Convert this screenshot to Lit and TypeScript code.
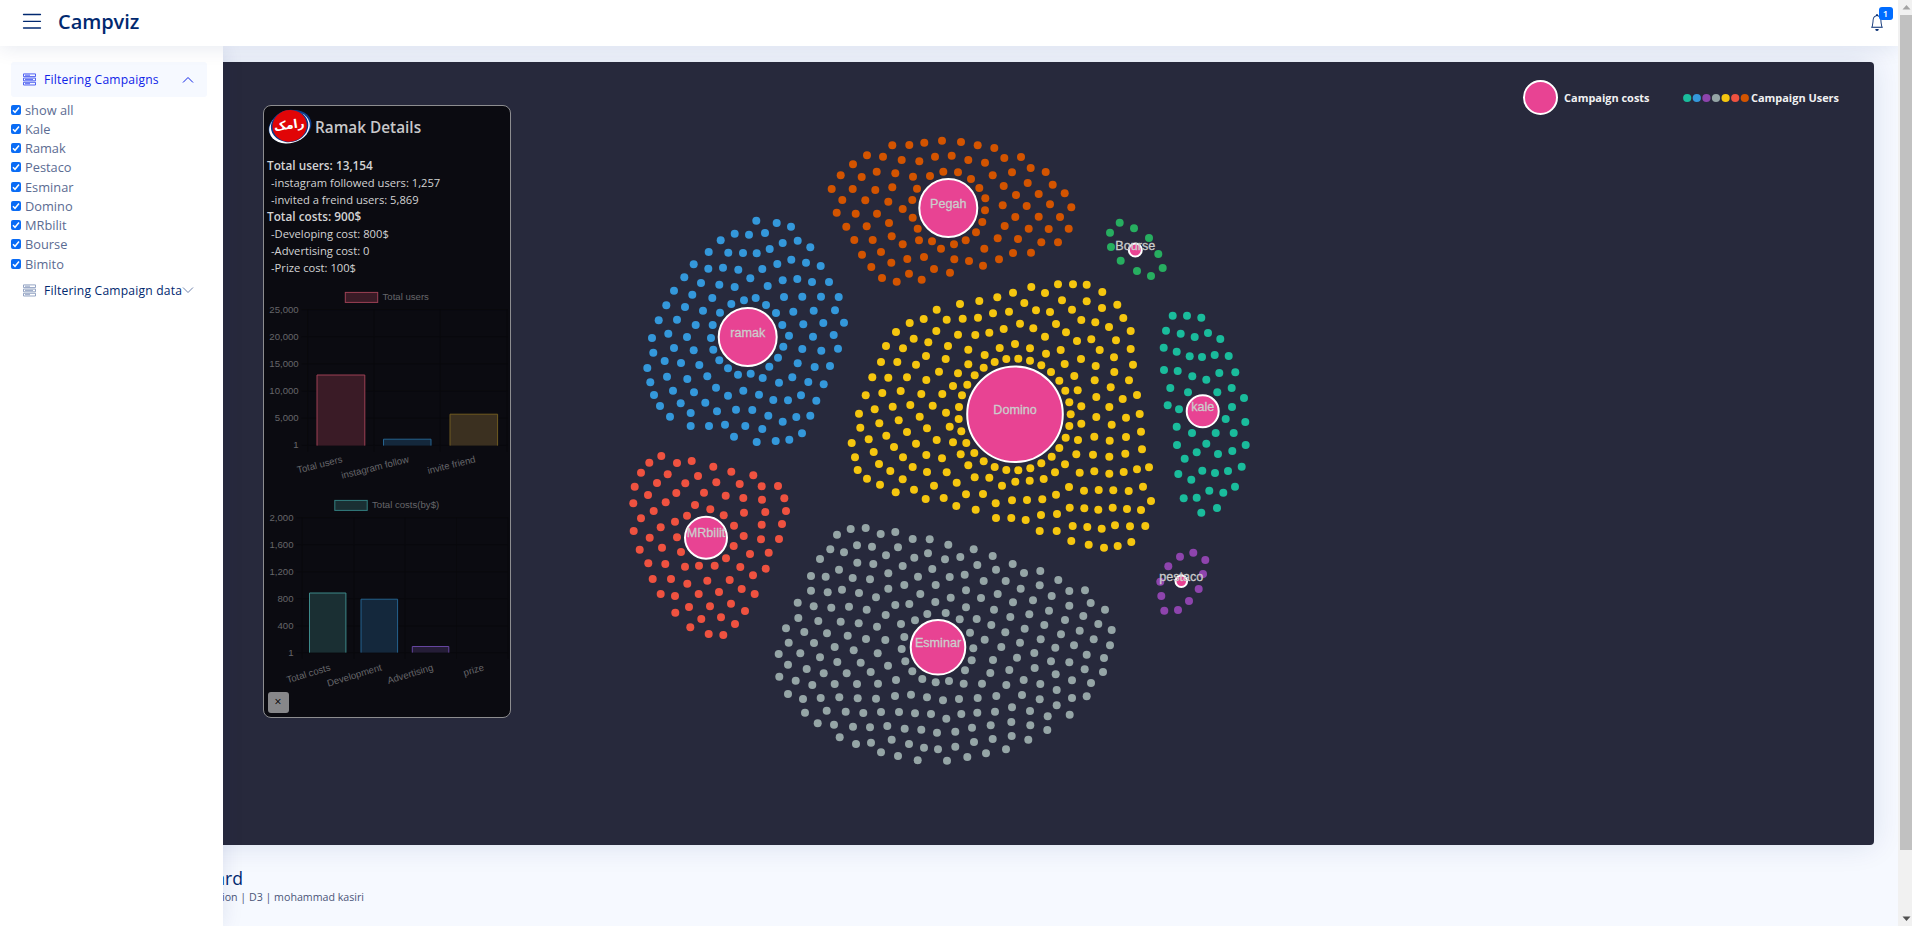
import { LitElement, html, svg, css } from "lit";
import { customElement, state } from "lit/decorators.js";

interface Cluster {
  name: string;
  color: string;
  cx: number;
  cy: number;
  r: number;
  // dots are stored in thirds of a pixel, relative to this origin
  origin: [number, number];
  dots: number[];
}

const CLUSTERS: Cluster[] = [
  {
    name: "Pegah", color: "#d35400", cx: 948.3, cy: 208, r: 29, origin: [810, 120],
    dots: [247,76,298,75,343,68,396,62,453,66,503,76,553,84,171,106,219,110,275,120,328,124,375,110,425,107,475,120,525,128,583,114,633,111,129,133,662,144,707,156,92,166,155,171,200,155,256,160,309,170,360,168,400,155,444,157,483,177,548,166,606,157,653,189,728,194,65,207,128,207,196,210,247,202,321,206,508,204,581,198,618,225,686,222,764,220,97,240,166,241,235,245,307,240,526,235,578,256,650,258,720,253,784,262,80,278,137,281,201,281,278,267,308,293,525,271,517,306,616,291,686,290,750,291,109,320,170,319,237,309,323,326,498,337,584,318,656,326,716,327,776,326,133,360,188,360,245,349,327,361,366,364,432,373,467,361,563,355,624,357,694,367,744,367,156,404,213,396,278,373,393,386,523,386,609,399,663,398,184,441,244,428,292,417,342,411,433,418,477,423,519,437,567,418,216,474,260,485,297,461,335,479,372,447,420,458],
  },
  {
    name: "ramak", color: "#3498db", cx: 747.7, cy: 337, r: 29, origin: [620, 200],
    dots: [409,62,470,69,513,80,344,101,387,104,435,99,302,121,488,129,533,122,571,142,266,156,325,158,369,159,410,160,449,147,221,193,265,206,309,203,355,209,427,207,472,192,514,179,558,188,602,198,193,232,243,249,298,254,344,261,391,235,443,258,488,241,532,237,576,246,627,246,162,272,217,284,277,294,334,312,372,301,407,294,438,315,492,291,547,290,603,290,656,291,139,316,195,321,249,332,300,338,468,339,520,335,581,332,645,331,116,361,171,359,227,375,278,375,487,375,550,373,610,369,672,368,96,414,145,401,201,411,273,414,507,407,579,410,641,405,100,458,162,444,221,451,280,449,490,440,547,447,604,452,654,446,82,504,134,483,183,489,238,495,298,481,474,473,533,490,584,501,630,498,91,547,141,530,202,537,262,529,324,505,354,524,392,521,428,534,448,500,477,548,517,532,565,546,611,553,102,585,159,572,222,577,288,563,324,587,370,572,417,584,460,600,504,601,543,586,589,602,120,618,182,610,256,608,212,639,291,634,348,629,397,630,445,647,488,665,529,651,571,647,150,650,212,678,267,678,315,674,376,678,427,687,342,710,410,726,467,723,508,719,546,700],
  },
  {
    name: "Domino", color: "#f5c60f", cx: 1015, cy: 414.3, r: 47.8, origin: [830, 270],
    dots: [604,51,684,43,729,43,770,44,817,66,645,69,549,68,502,82,448,93,390,102,583,99,696,91,770,94,862,104,816,114,320,119,618,121,660,126,726,119,880,144,281,147,350,149,398,146,444,143,489,130,537,125,239,159,570,161,678,162,754,150,796,157,837,171,902,183,198,186,319,183,384,194,436,195,478,188,521,177,610,175,708,187,645,200,251,206,295,217,741,213,784,208,858,211,168,228,219,235,354,228,415,239,509,234,555,222,600,235,692,240,809,240,902,237,648,251,464,255,288,258,347,267,529,267,565,266,600,272,753,267,852,262,153,276,202,276,258,284,415,283,494,276,634,286,704,282,797,288,909,284,461,293,127,322,175,323,231,322,327,305,384,310,434,316,663,306,733,318,853,306,289,330,688,332,794,331,897,331,369,348,412,344,842,352,107,376,157,369,212,363,274,372,337,372,396,376,706,362,743,361,799,381,878,387,921,375,134,418,188,410,241,405,308,407,387,411,718,397,754,409,838,411,87,431,269,440,348,428,386,447,722,433,799,441,888,443,929,432,91,473,148,460,206,451,291,475,359,470,394,484,718,468,754,461,845,464,116,508,169,497,231,486,320,510,369,517,409,519,707,503,744,510,793,500,839,512,888,501,933,485,65,519,192,531,258,521,688,534,131,546,289,555,392,553,433,549,739,553,789,554,838,560,886,551,936,538,75,562,219,562,336,565,461,574,665,560,147,582,415,586,494,591,634,580,705,583,83,600,181,603,248,591,291,606,350,607,529,600,565,601,601,595,675,607,749,608,793,604,838,611,881,606,921,598,957,592,111,626,218,628,434,622,478,623,556,635,599,632,641,627,150,644,380,638,516,647,312,647,717,651,762,662,806,660,850,661,896,663,939,650,197,667,252,659,408,673,459,672,678,674,287,687,341,684,497,700,546,691,591,690,637,688,963,693,379,708,437,719,681,732,719,713,763,715,805,719,848,713,891,717,933,720,498,744,544,744,587,750,633,735,629,783,680,783,728,768,772,771,815,776,855,766,900,769,946,768,724,813,776,824,822,833,863,828,904,816],
  },
  {
    name: "kale", color: "#1abc9c", cx: 1202.7, cy: 411.3, r: 16, origin: [1090, 290],
    dots: [248,77,291,77,334,83,228,122,272,131,314,141,354,129,391,147,221,173,260,185,299,199,336,201,374,195,416,198,222,240,263,243,307,259,349,269,388,249,436,247,241,294,294,307,382,307,425,294,462,324,233,346,267,358,426,351,407,387,466,396,260,410,306,429,377,429,431,429,261,465,349,461,320,487,467,465,284,506,384,492,427,483,455,530,265,552,304,569,337,542,375,549,414,543,435,590,281,625,320,623,358,602,400,608,334,668,381,654],
  },
  {
    name: "MRbilit", color: "#ef5240", cx: 706, cy: 537.7, r: 21, origin: [610, 430],
    dots: [154,78,118,98,201,99,245,93,310,110,93,128,173,133,264,138,364,125,430,136,74,170,141,159,226,160,319,157,389,162,455,169,504,168,114,195,199,189,282,188,347,197,400,204,456,209,523,205,70,220,167,217,255,225,131,243,301,238,402,248,466,246,528,243,93,265,195,275,231,257,341,256,152,292,372,287,455,284,516,282,71,303,119,323,201,322,401,318,453,328,507,327,89,359,156,353,213,366,371,348,420,372,476,368,115,400,166,402,225,410,267,407,314,407,348,385,391,411,467,416,128,447,183,447,232,461,292,452,359,450,429,436,152,492,195,498,266,492,327,486,395,477,434,492,237,531,300,529,363,521,196,548,274,567,333,562,405,543,241,592,375,582,296,612,340,615],
  },
  {
    name: "Esminar", color: "#95a5a6", cx: 938, cy: 647.3, r: 27.3, origin: [760, 510],
    dots: [231,74,272,57,317,54,362,72,406,66,458,87,509,88,565,104,641,118,698,138,758,162,841,183,895,210,928,243,975,241,992,279,1035,299,1015,342,1055,360,211,118,252,127,291,106,336,110,378,136,414,112,463,143,504,130,555,148,601,141,652,165,708,179,792,189,180,147,237,179,292,158,340,162,385,190,428,168,474,200,517,177,569,201,614,194,671,213,737,213,782,236,839,226,875,258,153,198,197,200,278,204,330,208,385,236,433,225,527,225,618,241,713,252,819,271,153,242,203,247,246,239,297,249,348,262,481,252,572,263,663,264,759,277,867,302,928,287,970,318,113,278,161,289,214,293,267,290,320,299,377,315,406,285,448,282,526,276,618,292,702,299,751,321,808,313,853,345,915,330,959,362,115,324,175,333,242,335,296,340,351,350,423,342,465,331,502,312,557,309,599,328,650,327,694,345,736,367,794,356,842,388,903,373,942,406,1001,388,1050,406,78,355,133,366,201,370,263,377,318,387,376,390,433,381,630,368,674,389,724,411,780,398,823,429,886,413,980,434,1032,444,86,398,162,399,224,411,281,421,353,430,425,417,640,415,771,443,873,454,928,457,56,432,121,430,180,442,232,456,302,458,384,467,436,454,635,451,699,450,748,480,824,474,887,493,974,478,1029,486,84,464,140,477,191,490,260,490,332,486,457,484,615,481,691,489,791,510,841,522,936,511,993,519,58,500,107,512,157,525,224,522,291,522,354,521,408,510,487,507,527,517,567,513,611,521,666,521,739,525,890,540,84,552,129,567,182,564,238,562,293,565,348,566,405,558,453,554,501,562,549,571,597,567,653,564,709,558,786,555,839,568,936,564,980,559,135,608,200,602,257,605,310,609,363,606,417,606,465,610,513,612,559,626,604,612,652,608,705,605,756,592,810,603,890,586,863,619,929,614,173,640,222,644,279,650,330,652,382,648,434,656,484,659,531,668,586,665,636,653,692,646,754,636,811,646,862,660,239,682,288,702,333,698,395,689,447,702,492,713,534,718,586,710,642,696,698,687,755,678,805,689,363,727,414,738,473,751,561,752,622,741,678,730,738,718],
  },
  {
    name: "Bourse", color: "#27ae60", cx: 1135.3, cy: 250, r: 6.5, origin: [810, 120],
    dots: [929,308,972,325,900,338,1017,354,903,381,1045,402,932,422,1058,444,981,453,1023,468],
  },
  {
    name: "pestaco", color: "#8e44ad", cx: 1181.3, cy: 581.3, r: 5.8, origin: [1090, 290],
    dots: [310,788,270,800,346,810,235,829,339,852,211,875,326,897,214,918,297,933,223,962,264,960],
  },
];

const FILTERS = ["show all", "Kale", "Ramak", "Pestaco", "Esminar", "Domino", "MRbilit", "Bourse", "Bimito"];
const LEGEND = ["#1abc9c", "#3498db", "#8e44ad", "#95a5a6", "#f5c60f", "#ef5240", "#d35400"];

interface Bar { x: number; w: number; y: number; fill: string; stroke: string }
interface ChartSpec {
  title: string; view: string; height: number;
  key: { x: number; y: number; fill: string; stroke: string };
  base: number; axis: number; top: number; step: number; ticks: string[];
  grid: number[]; bars: Bar[]; angle: number; labelY: number; labels: [string, number][];
}

const USERS: ChartSpec = {
  title: "Total users", view: "264 283.4 245 206", height: 206,
  key: { x: 345.3, y: 292.8, fill: "#3a1b26", stroke: "#9d4155" },
  base: 446, axis: 298.7, top: 310, step: 27.15, ticks: ["25,000", "20,000", "15,000", "10,000", "5,000", "1"],
  grid: [307.6, 374, 440.3, 507],
  bars: [
    { x: 317, w: 47.8, y: 375.4, fill: "#3a1b26", stroke: "#9d4155" },
    { x: 383.5, w: 47.5, y: 439.6, fill: "#14283c", stroke: "#25638f" },
    { x: 450, w: 47.6, y: 414.6, fill: "#3b3020", stroke: "#705b20" },
  ],
  angle: -14, labelY: 462.5, labels: [["Total users", 343], ["instagram follow", 409.5], ["invite friend", 476]],
};

const COSTS: ChartSpec = {
  title: "Total costs(by$)", view: "264 489.4 245 200", height: 200,
  key: { x: 334.8, y: 500.8, fill: "#1a2f33", stroke: "#337f80" },
  base: 653, axis: 293.5, top: 518, step: 27.05, ticks: ["2,000", "1,600", "1,200", "800", "400", "1"],
  grid: [302.3, 354, 405, 456.5, 508],
  bars: [
    { x: 309.5, w: 36.4, y: 593.4, fill: "#1a2f33", stroke: "#3d8a8a" },
    { x: 361, w: 36.6, y: 599.6, fill: "#14283c", stroke: "#25638f" },
    { x: 412.3, w: 36.5, y: 646.9, fill: "#251d37", stroke: "#6545a0" },
  ],
  angle: -17, labelY: 670.5,
  labels: [["Total costs", 331], ["Development", 382.3], ["Advertising", 433.8], ["prize", 484.5]],
};

@customElement("cost-chart")
class CostChart extends LitElement {
  static properties = { spec: { attribute: false } };
  declare spec: ChartSpec;

  static styles = css`
    :host { display: block; }
    svg { display: block; }
    text { font: 9.6px "Liberation Sans", Arial, sans-serif; fill: #66666a; }
    .grid { stroke: #09090d; stroke-width: 1; }
  `;

  render() {
    const s = this.spec;
    return html`<svg width="245" height=${s.height} viewBox=${s.view}>
      ${s.grid.map((x) => svg`<line class="grid" x1=${x} x2=${x} y1=${s.top} y2=${s.base + 6} />`)}
      ${s.ticks.map((t, i) => svg`
        <line class="grid" x1=${s.grid[0] - 6} x2="508" y1=${s.top + i * s.step} y2=${s.top + i * s.step} />
        <text x=${s.axis} y=${s.top + i * s.step + 3} text-anchor="end">${t}</text>`)}
      <rect x=${s.key.x} y=${s.key.y} width="32.4" height="10" fill=${s.key.fill} stroke=${s.key.stroke} />
      <text x=${s.key.x + 37.2} y=${s.key.y + 7.3}>${s.title}</text>
      ${s.bars.map((b) => svg`
        <rect x=${b.x} y=${b.y} width=${b.w} height=${s.base - b.y} fill=${b.fill} />
        <path d=${`M${b.x} ${s.base}V${b.y}h${b.w}V${s.base}`} fill="none" stroke=${b.stroke} />`)}
      ${s.labels.map(([t, x]) => svg`
        <text x=${x} y=${s.labelY} text-anchor="end" transform=${`rotate(${s.angle} ${x} ${s.labelY})`}>${t}</text>`)}
    </svg>`;
  }
}

@customElement("bubble-map")
class BubbleMap extends LitElement {
  static styles = css`
    :host { display: block; }
    svg { display: block; }
    text {
      font: 12.6px "Liberation Sans", Arial, sans-serif; fill: #cccccc; text-anchor: middle;
      stroke: #cccccc; stroke-width: .3;
    }
    .hub { fill: #e84393; stroke: #fff; stroke-width: 2; }
  `;

  render() {
    return html`<svg width="740" height="700" viewBox="580 110 740 700">
      ${CLUSTERS.map((c) => {
        const nodes = [];
        for (let i = 0; i < c.dots.length; i += 2) {
          nodes.push(svg`<circle cx=${(c.origin[0] + c.dots[i] / 3).toFixed(1)} cy=${(c.origin[1] + c.dots[i + 1] / 3).toFixed(1)} r="4" />`);
        }
        return svg`<g fill=${c.color}>${nodes}</g>
          <circle class="hub" cx=${c.cx} cy=${c.cy} r=${c.r} />
          <text x=${c.cx} y=${c.cy - 0.3}>${c.name}</text>`;
      })}
    </svg>`;
  }
}

@customElement("app-root")
class AppRoot extends LitElement {
  @state() private checked = new Set<string>(FILTERS);

  static styles = css`
    * { box-sizing: border-box; }
    :host {
      display: grid;
      grid-template-columns: 1fr 14px;
      height: 926px;
      overflow: hidden;
      font-family: "Open Sans", "Noto Sans", sans-serif;
      background: #f6f9ff;
      color: #012970;
    }
    .page { position: relative; display: flex; flex-direction: column; height: 926px; overflow: hidden; }
    .header {
      position: relative; z-index: 3; flex: none; height: 46px; padding: 0 5px 0 22px;
      display: flex; align-items: center; background: #fff;
      box-shadow: 0 2px 20px rgba(1, 41, 112, .1);
    }
    .burger { width: 20px; height: 16px; margin-top: -4px; }
    .brand { margin: -3px 0 0 16px; font-size: 20px; font-weight: 600; letter-spacing: -.05px; }
    .bell { position: relative; margin-left: auto; width: 23px; height: 30px; }
    .bell svg { position: absolute; left: 0; top: 6px; }
    .badge {
      position: absolute; left: 8.5px; top: -1px; width: 14px; height: 13px; border-radius: 3px;
      background: #006cff; color: #fff; font-size: 9.5px; line-height: 13px; font-weight: 600; text-align: center;
    }
    .sidebar {
      position: absolute; z-index: 2; left: 0; top: 46px; bottom: 0; width: 223px;
      padding: 16px 16px 0 11px; background: #fff; box-shadow: 0 0 20px rgba(1, 41, 112, .1);
    }
    .nav {
      display: flex; align-items: center; height: 35px; padding: 0 13px 0 12px; border-radius: 3px;
      font-size: 12.1px; font-weight: 500; letter-spacing: .2px; white-space: nowrap;
    }
    .nav .ico { flex: none; width: 13px; height: 13px; margin-right: 8px; color: #899bbd; }
    .nav .chev { flex: none; width: 12px; height: 12px; margin-left: auto; }
    .nav.open { background: #f6f9ff; color: #0f24e8; }
    .nav.open .ico { color: #4154f1; }
    .list { padding-top: 3px; }
    .row { display: flex; align-items: center; height: 19.25px; font-size: 12.8px; font-weight: 400; color: #5b6b92; }
    .box { flex: none; width: 10px; height: 10px; margin-right: 4px; border-radius: 2px; background: #0a6cf5; }
    .box.off { background: #fff; border: 1px solid #767676; }
    .box svg { display: block; }
    .second { margin-top: -.5px; }
    .main { flex: 1; padding: 16px 24px 0 24px; }
    .board {
      position: relative; height: 782.5px; display: flex; border-radius: 4px; background: #27293c;
      box-shadow: 0 0 30px rgba(1, 41, 112, .12);
    }
    .panel {
      flex: none; width: 248px; height: 613px; margin: 42.5px 0 0 239px; padding: 0 0 0 3px; border: 1px solid #8d8d90;
      border-radius: 8px; background: #0b0b11; color: #d3d3d4; overflow: hidden;
    }
    .head { display: flex; align-items: center; height: 44px; font-size: 15.35px; font-weight: 600; color: #c8c8ca; }
    .head svg { flex: none; margin: -1px 2px 0 0; }
    .head span { margin-top: -1px; }
    .facts { padding: 7px 0 0 0; font-size: 11.2px; line-height: 17px; height: 133px; }
    .facts .strong { font-weight: 600; font-size: 11.8px; }
    .facts .sub { padding-left: 4px; }
    .panel cost-chart { margin-left: -3.5px; }
    .close {
      display: block; width: 21px; height: 21px; margin: 3px 0 0 .5px; padding: 0; border: 0; border-radius: 3px;
      background: #87878a; color: #000; font: 12px/20px "Open Sans", sans-serif;
    }
    .map { margin: 47.7px 0 0 69px; }
    .legend {
      position: absolute; right: 35px; top: 17.5px; height: 36px; display: flex; align-items: center;
      font-size: 10.95px; font-weight: 700; color: #f1f1f2; white-space: nowrap;
    }
    .costs { width: 35px; height: 35px; margin-right: 6px; border: 2px solid #fff; border-radius: 50%; background: #e84393; }
    .dots { display: block; margin: 0 2px 0 33.5px; }
    .caption { padding: 22.5px 0 0 0; width: 220px; color: #012970; text-align: right; white-space: nowrap; }
    .caption .title { font-size: 17.6px; line-height: 22px; margin-right: 1px; }
    .caption .crumb { width: 340px; margin-top: 0; font-size: 10.65px; line-height: 16px; color: #4a5578; }
    .scroll { position: relative; z-index: 4; display: flex; flex-direction: column; align-items: flex-end; background: #f1f1f1; }
    .thumb { width: 12px; height: 835px; background: #c1c1c1; }
    .scroll svg { display: block; flex: none; }
    .gap { flex: 1; }
  `;

  private toggle(name: string) {
    const next = new Set(this.checked);
    next.has(name) ? next.delete(name) : next.add(name);
    this.checked = next;
  }

  private stackIcon() {
    return html`<svg class="ico" viewBox="0 0 13 13" fill="none" stroke="currentColor" stroke-width=".9">
      <path d="M.5 .9h12v2.7H.5zM.5 5.1h12v2.7H.5zM.5 9.3h12V12H.5zM2 2.2h5M2 6.4h8M2 10.7h5" />
    </svg>`;
  }

  render() {
    return html`
      <div class="page">
        <header class="header">
          <svg class="burger" viewBox="0 0 20 16" stroke="#012970" stroke-width="1.3" stroke-linecap="round">
            <path d="M1.5 1.5h17M1.5 8.3h17M1.5 15h17" />
          </svg>
          <div class="brand">Campviz</div>
          <div class="bell">
            <svg width="14" height="17" viewBox="0 0 16 16" preserveAspectRatio="none" fill="#012970">
              <path d="M8 16a2 2 0 0 0 2-2H6a2 2 0 0 0 2 2zM8 1.918l-.797.161A4.002 4.002 0 0 0 4 6c0 .628-.134 2.197-.459 3.742-.16.767-.376 1.566-.663 2.258h10.244c-.287-.692-.502-1.49-.663-2.258C12.134 8.197 12 6.628 12 6a4.002 4.002 0 0 0-3.203-3.92L8 1.917zM14.22 12c.223.447.481.801.78 1H1c.299-.199.557-.553.78-1C2.68 10.2 3 6.88 3 6c0-2.42 1.72-4.44 4.005-4.901a1 1 0 1 1 1.99 0A5.002 5.002 0 0 1 13 6c0 .88.32 4.2 1.22 6z" />
            </svg>
            <span class="badge">1</span>
          </div>
        </header>

        <aside class="sidebar">
          <div class="nav open">
            ${this.stackIcon()}<span>Filtering Campaigns</span>
            <svg class="chev" viewBox="0 0 12 12" fill="none" stroke="currentColor"><path d="M1 8.5l5-5 5 5" /></svg>
          </div>
          <div class="list">
            ${FILTERS.map((f) => html`
              <div class="row" @click=${() => this.toggle(f)}>
                <span class="box ${this.checked.has(f) ? "" : "off"}">
                  <svg width="10" height="10" viewBox="0 0 10 10" fill="none" stroke="#fff" stroke-width="1.5"><path d="M2 5.3l2 2 4-4.8" /></svg>
                </span><span>${f}</span>
              </div>`)}
          </div>
          <div class="nav second">
            ${this.stackIcon()}<span>Filtering Campaign data</span>
            <svg class="chev" viewBox="0 0 12 12" fill="none" stroke="#6f82ab"><path d="M1 3.5l5 5 5-5" /></svg>
          </div>
        </aside>

        <main class="main">
          <section class="board">
            <div class="panel">
              <div class="head">
                <svg width="46" height="38" viewBox="0 0 46 38">
                  <ellipse cx="23" cy="18.5" rx="21.8" ry="16" transform="rotate(-17 23 18.5)" fill="#0b3c8c" />
                  <ellipse cx="22.5" cy="19.5" rx="20.6" ry="15.6" transform="rotate(-15 22.5 19.5)" fill="#fff" />
                  <ellipse cx="22.6" cy="18" rx="18.8" ry="16" transform="rotate(-12 22.6 18)" fill="#0b3c8c" />
                  <ellipse cx="22.6" cy="17.8" rx="17.2" ry="15.8" transform="rotate(-12 22.6 17.8)" fill="#e10507" />
                  <text x="22.5" y="21" text-anchor="middle" font-family="DejaVu Sans" font-weight="700" font-size="12" fill="#fff" transform="rotate(-8 22 20)">رامک</text>
                </svg>
                <span>Ramak Details</span>
              </div>
              <div class="facts">
                <div class="strong">Total users: 13,154</div>
                <div class="sub">-instagram followed users: 1,257</div>
                <div class="sub">-invited a freind users: 5,869</div>
                <div class="strong">Total costs: 900$</div>
                <div class="sub">-Developing cost: 800$</div>
                <div class="sub">-Advertising cost: 0</div>
                <div class="sub">-Prize cost: 100$</div>
              </div>
              <cost-chart .spec=${USERS}></cost-chart>
              <cost-chart .spec=${COSTS}></cost-chart>
              <button class="close">×</button>
            </div>
            <bubble-map class="map"></bubble-map>
            <div class="legend">
              <span class="costs"></span><span>Campaign costs</span>
              <svg class="dots" width="66" height="10" viewBox="0 0 66 10">
                ${LEGEND.map((c, i) => svg`<circle cx=${4.2 + i * 9.6} cy="5" r="4.1" fill=${c} />`)}
              </svg>
              <span>Campaign Users</span>
            </div>
          </section>
          <div class="caption">
            <div class="title">Dashboard</div>
            <div class="crumb">Data visualization | D3 | mohammad kasiri</div>
          </div>
        </main>
      </div>
      <div class="scroll">
        <svg width="12" height="15" viewBox="0 0 12 15"><path d="M2.5 9.5L6.5 5l4 4.5z" fill="#a3a3a3" /></svg>
        <div class="thumb"></div>
        <div class="gap"></div>
        <svg width="12" height="15" viewBox="0 0 12 15"><path d="M2.5 5.5l4 4.5 4-4.5z" fill="#505050" /></svg>
      </div>
    `;
  }
}
